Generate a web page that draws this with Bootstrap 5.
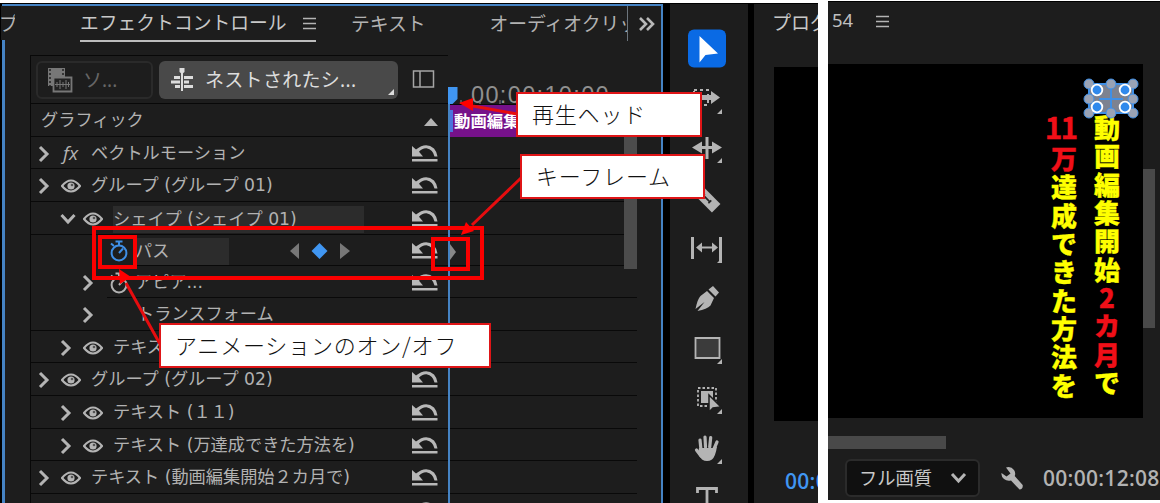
<!DOCTYPE html>
<html lang="ja">
<head>
<meta charset="utf-8">
<title>エフェクトコントロール</title>
<link href="https://cdn.jsdelivr.net/npm/bootstrap@5.3.0/dist/css/bootstrap.min.css" rel="stylesheet">
<style>
body{width:1160px;height:503px;background:#fff;font-family:"Noto Sans","Noto Sans CJK JP",sans-serif;color:#b2b2b2;line-height:1}
svg{display:block;flex:none}
.workspace{width:818px;height:500px;margin-top:3px;background:#000}
.fx-panel{width:661px;height:510px;margin:1px 0 0 2px;background:#1d1d1d;border:2px solid #4583c4;border-left-width:3px}
.tabs{height:49px;font-size:18.8px}
.tab{line-height:36px;white-space:nowrap}
.tab-prev{width:14px;height:34px;margin-left:-4px;background:#1d1d1d;text-indent:-2px}
.tab-on{width:236px;margin-left:65px;height:36px;border-bottom:2px solid #bdbdbd;color:#c8c8c8}
.tree{width:418px;margin-left:25px;border-left:1px solid #080808;border-top:1px solid #080808}
.toolbar{height:48px;border-bottom:1px solid #080808;padding:5px 13px 0 5px}
.chip{height:38px;border-radius:6px;font-size:19px}
.chip-off{width:117px;border:2px solid #2a2a2a;color:#666;padding-left:9px}
.chip-on{width:239px;background:#494949;color:#ddd;margin-left:6px;padding-left:12px}
.prop{border-bottom:1px solid #090909;font-family:"DejaVu Sans","Noto Sans CJK JP",sans-serif;font-size:17.2px;padding-right:10px;padding-top:2px;white-space:nowrap}
.h32{height:32px}.h31{height:31px}.h33{height:33px}
.lv0{padding-left:7px}.lv1{padding-left:29px}.lv2{padding-left:51px}
.tw{width:23px}.ic{width:30px}
.picked{background:#2c2c2c;height:27px;line-height:26px}
.inset-line{border-bottom-color:transparent;background:linear-gradient(#090909,#090909) 76px 100%/400px 1px no-repeat;background-origin:border-box;background-clip:border-box}
.ruler{height:48px;font:23.5px "Liberation Sans",sans-serif;letter-spacing:1.35px;color:#909090;padding:26px 0 0 23px;white-space:nowrap}
.timeline{width:189px;border-top:1px solid transparent}
.lane{border-bottom:1px solid #090909}
.clip{background:#76118a;height:33px;border-top:1px solid #090909;color:#fff;font-size:16.4px;line-height:31px;padding-left:6px;white-space:nowrap}
.clip:before{content:"";position:absolute;left:0;top:5px;width:5px;height:22px;background:#4c73dc;z-index:0}
.playline{left:448px;top:88px;width:2px;height:415px;background:#4583c4}
.vbar{left:624px;top:137px;width:13px;height:132px;background:#4c4c4c}
.tools{width:78px;margin:1px 0 0 7px;background:#1d1d1d;padding:19px 0 0 12px}
.prog{width:64px;margin:1px 0 0 6px;background:#1d1d1d}
.prog-title{height:63px;font-size:19px;line-height:38px;padding-left:18px;white-space:nowrap;color:#c8c8c8}
.mon-a{height:354px;margin-left:20px;background:#000}
.tc{font:600 21px/1 "Open Sans","Noto Sans",sans-serif;letter-spacing:.3px;white-space:nowrap}
.viewer{width:332px;height:499px;margin:1px 0 0 10px;background:#1d1d1d;border-top:1px solid #000}
.v-title{height:62px;font-size:18.5px;padding:9px 0 0 4px;color:#c0c0c0}
.mon-b{width:315px;height:354px;background:#000;padding:49px 0 0 217px}
.col-v{width:38px;font:900 26px/28.35px "Noto Sans CJK JP",sans-serif;color:#ff0;-webkit-text-stroke:.3px currentColor}
.col-v i{font-style:normal;color:#f00f18}
.col-v .pair{font:700 31px/36px "Noto Sans CJK JP",sans-serif;font-size:30px;letter-spacing:-2px;height:36px;margin-top:-5px;margin-left:-7px}
.v-thumb{width:12px;height:159px;margin-top:105px;background:#494949}
.h-thumb{width:118px;height:13px;margin-top:18px;background:#494949}
.quality{width:135px;height:38px;margin-left:17px;border:2px solid #2b2b2b;border-radius:6px;background:#101010;color:#c8c8c8;font-size:18.3px;padding:0 11px 0 12px}
.note{background:#fff;border:2px solid #df1517;height:45px;color:#111;font:300 22px/38px "Noto Sans CJK JP",sans-serif;letter-spacing:.8px;padding-left:14px;white-space:nowrap}
.n1{left:516px;top:92px;width:186px}
.n2{left:520px;top:154px;width:185px}
.n3{left:159px;top:323px;width:332px}
</style>
</head>
<body class="overflow-hidden position-relative d-flex align-items-start">
<svg width="0" height="0" class="position-absolute">
  <symbol id="right" viewBox="0 0 12 18"><path d="M2 2l7 7-7 7" fill="none" stroke="#b4b4b4" stroke-width="3"/></symbol>
  <symbol id="down" viewBox="0 0 16 12"><path d="M1.500 2l6.500 7 6.500-7" fill="none" stroke="#b4b4b4" stroke-width="3"/></symbol>
  <symbol id="eye" viewBox="0 0 20 14"><path d="M1 7Q10-4 19 7Q10 18 1 7Z" fill="none" stroke="#b4b4b4" stroke-width="2.200"/><circle cx="10" cy="7" r="3.600" fill="#b4b4b4"/><circle cx="11" cy="6" r="1.300" fill="#555"/></symbol>
  <symbol id="reset" viewBox="0 0 26 18"><path d="M0 1l4 3.500Q14-3.500 22 3.500Q25 7 25.500 11.500h-3Q21 4.500 14.500 3.200Q10 3 7 6.800l4 4.700H0zM0 14h25.500v2.600H0z" fill="#b8b8b8"/></symbol>
  <symbol id="watch" viewBox="0 0 20 22"><g fill="none" stroke="currentColor" stroke-width="2"><circle cx="10" cy="13" r="7.400"/><path d="M10 5V1M6.500 1.500h7M10 13l4-4.500M2 3.500l3 2.500"/></g></symbol>
  <symbol id="bars" viewBox="0 0 13 13"><path d="M0 1.500h13M0 6.500h13M0 11.500h13" stroke="#b4b4b4" stroke-width="1.600"/></symbol>
</svg>

<main class="workspace d-flex overflow-hidden flex-shrink-0">
  <section class="fx-panel flex-shrink-0">
    <nav class="tabs d-flex">
      <span class="tab tab-prev overflow-hidden">プ</span>
      <span class="tab tab-on d-flex justify-content-between align-items-center">エフェクトコントロール<svg width="13" height="13"><use href="#bars"/></svg></span>
      <span class="tab" style="margin-left:35px">テキスト</span>
      <span class="tab overflow-hidden border-end border-secondary" style="margin-left:64px;width:138px;height:35px">オーディオクリップ</span>
      <svg class="mt-2" style="margin-left:10px" width="18" height="20"><path d="M2 4l6 6-6 6M9 4l6 6-6 6" fill="none" stroke="#b8b8b8" stroke-width="2.600"/></svg>
    </nav>
    <div class="d-flex">
      <div class="tree flex-shrink-0">
        <div class="toolbar d-flex">
          <div class="chip chip-off d-flex align-items-center">
            <svg width="26" height="26" viewBox="0 0 26 26"><path d="M1 1h17v9H7v9H1z" fill="#777"/><path d="M3 2v17M16 2v8" stroke="#222" stroke-width="1.500" stroke-dasharray="2 2"/><path d="M6.500 10.500h18v14h-18z" fill="#222" stroke="#777" stroke-width="1.800"/><path d="M8 17.500h15M10 15v5M13 13v9M16 15v5M19 13v9M21.500 15v5" stroke="#777"/></svg>
            <span style="margin-left:10px">ソ...</span></div>
          <div class="chip chip-on d-flex align-items-center position-relative">
            <svg width="23" height="24" viewBox="0 0 23 24"><path d="M11 1v22" stroke="#ddd" stroke-width="2"/><path d="M8.500 0h5v4l-2.500 2-2.500-2zM3 8h6v3H3zM0 12.500h9v3H0zM4 17h5v3H4zM13 8h9v3h-9zM13 12.500h5v3h-5zM13 17h9v3h-9z" fill="#ddd"/></svg>
            <span style="margin-left:11px;letter-spacing:.3px">ネストされたシ...</span>
            <svg class="position-absolute bottom-0 end-0 m-1" width="6" height="6"><path d="M6 0v6H0z" fill="#ddd"/></svg></div>
          <svg class="ms-auto mt-2" width="23" height="20"><path d="M1.500 2h20v16h-20zM8 2v16" fill="none" stroke="#a5a5a5" stroke-width="1.500"/></svg>
        </div>
        <div class="prop h33 d-flex align-items-center" style="padding-left:10px">グラフィック<svg class="ms-auto" width="14" height="9"><path d="M0 9l7-8 7 8z" fill="#b4b4b4"/></svg></div>
        <div class="prop lv0 h32 d-flex align-items-center"><span class="tw"><svg width="12" height="18"><use href="#right"/></svg></span><span class="ic fst-italic" style="font-family:'Open Sans';font-size:19px;padding-left:2px">fx</span>ベクトルモーション<svg class="ms-auto" width="26" height="18"><use href="#reset"/></svg></div>
        <div class="prop lv0 h33 d-flex align-items-center"><span class="tw"><svg width="12" height="18"><use href="#right"/></svg></span><span class="ic"><svg width="20" height="14"><use href="#eye"/></svg></span>グループ (グループ 01)<svg class="ms-auto" width="26" height="18"><use href="#reset"/></svg></div>
        <div class="prop lv1 h33 d-flex align-items-center"><span class="tw"><svg width="16" height="12"><use href="#down"/></svg></span><span class="ic"><svg width="20" height="14"><use href="#eye"/></svg></span><span class="picked" style="width:251px">シェイプ (シェイプ 01)</span><svg class="ms-auto" width="26" height="18"><use href="#reset"/></svg></div>
        <div class="prop lv2 h31 inset-line d-flex align-items-center"><span class="tw"></span><span class="ic" style="color:#3f8fe6;padding-left:4px"><svg width="20" height="22"><use href="#watch"/></svg></span><span class="picked" style="width:94px">パス</span>
          <svg class="ms-auto" style="margin-right:62px" width="61" height="18"><path d="M10 1v16L1 9zM51 1v16l10-8z" fill="#777"/><path d="M30.500 1l8 8-8 8-8-8z" fill="#4096f2"/></svg><svg width="26" height="18"><use href="#reset"/></svg></div>
        <div class="prop lv2 h32 inset-line d-flex align-items-center"><span class="tw"><svg width="12" height="18"><use href="#right"/></svg></span><span class="ic" style="padding-left:4px"><svg width="20" height="22"><use href="#watch"/></svg></span>アピア...<svg class="ms-auto" width="26" height="18"><use href="#reset"/></svg></div>
        <div class="prop lv2 h33 d-flex align-items-center"><span class="tw"><svg width="12" height="18"><use href="#right"/></svg></span><span style="margin-left:32px">トランスフォーム</span></div>
        <div class="prop lv1 h32 d-flex align-items-center"><span class="tw"><svg width="12" height="18"><use href="#right"/></svg></span><span class="ic"><svg width="20" height="14"><use href="#eye"/></svg></span>テキスト</div>
        <div class="prop lv0 h33 d-flex align-items-center"><span class="tw"><svg width="12" height="18"><use href="#right"/></svg></span><span class="ic"><svg width="20" height="14"><use href="#eye"/></svg></span>グループ (グループ 02)<svg class="ms-auto" width="26" height="18"><use href="#reset"/></svg></div>
        <div class="prop lv1 h33 d-flex align-items-center"><span class="tw"><svg width="12" height="18"><use href="#right"/></svg></span><span class="ic"><svg width="20" height="14"><use href="#eye"/></svg></span>テキスト (１１)<svg class="ms-auto" width="26" height="18"><use href="#reset"/></svg></div>
        <div class="prop lv1 h32 d-flex align-items-center"><span class="tw"><svg width="12" height="18"><use href="#right"/></svg></span><span class="ic"><svg width="20" height="14"><use href="#eye"/></svg></span>テキスト (万達成できた方法を)<svg class="ms-auto" width="26" height="18"><use href="#reset"/></svg></div>
        <div class="prop lv0 h33 d-flex align-items-center"><span class="tw"><svg width="12" height="18"><use href="#right"/></svg></span><span class="ic"><svg width="20" height="14"><use href="#eye"/></svg></span>テキスト (動画編集開始２カ月で)<svg class="ms-auto" width="26" height="18"><use href="#reset"/></svg></div>
        <div class="prop h33 d-flex align-items-center"><svg class="ms-auto" width="26" height="18"><use href="#reset"/></svg></div>
      </div>
      <div class="timeline">
        <div class="ruler">00:00:10:00</div>
        <div class="clip position-relative overflow-hidden"><span class="position-relative fw-semibold">動画編集開始２カ月</span></div>
        <div class="lane h32"></div><div class="lane h33"></div><div class="lane h33"></div><div class="lane h31"></div><div class="lane h32"></div><div class="lane h33"></div><div class="lane h32"></div><div class="lane h33"></div><div class="lane h33"></div><div class="lane h32"></div><div class="lane h33"></div>
      </div>
    </div>
  </section>

  <aside class="tools d-flex flex-column flex-shrink-0">
    <svg width="50" height="50" viewBox="682 23 50 50"><rect x="688" y="29.500" width="38" height="38" rx="6" fill="#0a6ae4"/><path d="M699.500 36v26.500l6-7.500 12.500-1.500z" fill="#fff"/></svg>
    <svg width="50" height="50" viewBox="682 73 50 50" fill="#b4b4b4"><path d="M694 90h14v15h-14z" fill="none" stroke="#b4b4b4" stroke-width="2" stroke-dasharray="3 3"/><path d="M701 95h10v-4l9 6.500-9 6.500v-4h-10zM722 109v5h-5z"/></svg>
    <svg width="50" height="50" viewBox="682 123 50 50" fill="#b4b4b4"><path d="M705.500 137h3v22h-3zM692 147.500l10-6v4.500h10v-4.500l10 6-10 6v-4.500h-10v4.500zM722 158v5h-5z"/></svg>
    <svg width="50" height="50" viewBox="682 173 50 50"><g transform="rotate(45 707 199)"><path d="M694 193h26v12h-26z" fill="#b4b4b4"/><path d="M702 199h9M702 197v4M711 197v4" stroke="#222" stroke-width="1.700"/></g></svg>
    <svg width="50" height="50" viewBox="682 223 50 50" fill="#b4b4b4"><path d="M691 237h3v22h-3zM719 237h3v26h-5l2-2zM696 247.500l6-5v4h10v-4l6 5-6 5v-4h-10v4z"/></svg>
    <svg width="50" height="50" viewBox="682 273 50 50"><path d="M713 286l6 6.500-3.500 4-7-7zM707 291l7 7-3.500 7.500q-3.500 3.500-13 5.500l7-9-9 7q2-10 5-13z" fill="#b4b4b4"/></svg>
    <svg width="50" height="50" viewBox="682 323 50 50"><path d="M695.500 338h24v20h-24z" fill="#3b3b3b" stroke="#b4b4b4" stroke-width="1.800"/><path d="M722 359v5h-5z" fill="#b4b4b4"/></svg>
    <svg width="50" height="50" viewBox="682 373 50 50" fill="#b4b4b4"><path d="M698 388h18v18h-18z" fill="none" stroke="#b4b4b4" stroke-width="1.800" stroke-dasharray="2.500 2"/><path d="M701 391h12v12h-12z"/><path d="M709 395v17l4-4 8-1z" stroke="#1d1d1d" stroke-width="1.500"/><path d="M722 409v5h-5z"/></svg>
    <svg width="50" height="50" viewBox="682 423 50 50" fill="#b4b4b4"><path d="M701 450l-1-10M705.500 447l-.5-10M709.700 447l1-9.500M713.500 450l3.500-8M701 456l-4.500-6" stroke="#b4b4b4" stroke-width="3.200" stroke-linecap="round"/><path d="M699 448h15l3-1.500q-1.500 10-5 13-5 3-10 0-2-2-4-6zM722 459v5h-5z"/></svg>
    <svg width="50" height="50" viewBox="682 473 50 50"><path d="M697.500 493v-4.500h19v4.500M707 489v30" fill="none" stroke="#b4b4b4" stroke-width="2.800"/></svg>
  </aside>

  <section class="prog flex-shrink-0 overflow-hidden">
    <div class="prog-title">プログラム</div>
    <div class="mon-a"></div>
    <div class="tc" style="color:#4096f2;padding:50px 0 0 31px">00:00</div>
  </section>
</main>

<section class="viewer flex-shrink-0 overflow-hidden">
  <div class="v-title d-flex gap-4"><span>54</span><svg style="margin:4px 0 0 -1px" width="13" height="13"><use href="#bars"/></svg></div>
  <div class="d-flex">
    <div class="mon-b d-flex">
      <div class="col-v text-center"><i class="pair d-block">11</i><i>万</i><br>達<br>成<br>で<br>き<br>た<br>方<br>法<br>を</div>
      <div class="col-v text-center" style="margin-left:5px">動<br>画<br>編<br>集<br>開<br>始<br><i>2</i><br><i>カ</i><br><i>月</i><br>で</div>
    </div>
    <div class="v-thumb"></div>
  </div>
  <div class="h-thumb"></div>
  <div class="d-flex align-items-center" style="padding-top:10px">
    <div class="quality d-flex align-items-center justify-content-between">フル画質<svg width="17" height="12"><use href="#down"/></svg></div>
    <svg style="margin-left:20px" width="24" height="25" viewBox="0 0 24 25"><path d="M6 1.500q5-1.500 8 2.500 2 3 .7 6l8 9q.5 4-3.200 4.500l-8.500-9q-4 1-7-1.500Q1 10.500 1.500 7l5 3.500 4-3z" fill="#b4b4b4"/></svg>
    <span class="tc" style="margin-left:19px">00:00:12:08</span>
  </div>
</section>

<!-- mask handles over the first character -->
<svg class="position-absolute" style="left:1080px;top:74px" width="62" height="48" viewBox="1080 74 62 48">
  <path d="M1089 84h44v29h-44z" fill="#7d8290" stroke="#3f8fe6" stroke-width="2"/>
  <path d="M1111 84v29M1099 99h24" stroke="#3f8fe6" stroke-width="2"/>
  <g fill="#9aa3b5" stroke="#3f8fe6"><circle cx="1089" cy="84" r="5"/><circle cx="1111" cy="84" r="5"/><circle cx="1133" cy="84" r="5"/><circle cx="1089" cy="99" r="5"/><circle cx="1133" cy="99" r="5"/><circle cx="1089" cy="113" r="5"/><circle cx="1111" cy="113" r="5"/><circle cx="1133" cy="113" r="5"/></g>
  <g fill="#3089ec" stroke="#fff" stroke-width="1.800"><circle cx="1097" cy="90" r="5.300"/><circle cx="1125" cy="90" r="5.300"/><circle cx="1097" cy="107" r="5.300"/><circle cx="1125" cy="107" r="5.300"/></g>
</svg>

<div class="vbar position-absolute"></div>
<div class="playline position-absolute"></div>
<svg class="position-absolute top-0 start-0" width="818" height="503">
  <path d="M448 87h9.500v12l-5 5h-4.500z" fill="#4096f2"/>
  <path d="M450 244l6 8-6 8z" fill="#888"/>
  <path d="M461 100v4M480 100v4M500 100v4" stroke="#888"/>
  <g fill="none" stroke="#fa0000" stroke-width="4"><path d="M94 228h388v50H94zM100 237h35v30h-35zM433 239h35v30h-35z"/></g>
  <path d="M517 114l-44-8M521 178l-49 47M160 344l-34-61" stroke="#e60d0f" stroke-width="3"/>
  <path d="M459 103l14-5v13zM461 235l5-13 8 9zM119 269l12 8-11 7z" fill="#f00"/>
</svg>
<div class="note n1 position-absolute">再生ヘッド</div>
<div class="note n2 position-absolute">キーフレーム</div>
<div class="note n3 position-absolute">アニメーションのオン/オフ</div>
<script src="https://cdn.jsdelivr.net/npm/bootstrap@5.3.0/dist/js/bootstrap.bundle.min.js"></script>
</body>
</html>
